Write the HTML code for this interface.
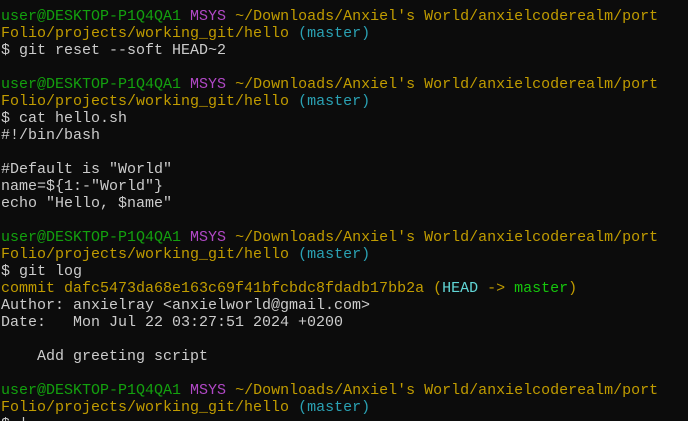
<!DOCTYPE html>
<html><head><meta charset="utf-8"><style>
html,body{margin:0;padding:0;background:#0c0c0c;width:688px;height:421px;overflow:hidden}
pre{margin:0;padding:8px 0 0 1px;font-family:"Liberation Mono",monospace;font-size:15px;line-height:17px;color:#cccccc;white-space:pre}
.g{color:#13a10e}.p{color:#b148c6}.y{color:#c19c00}.c{color:#2aa1b3}.bc{color:#61d6d6}.bg{color:#16c60c}
</style></head><body><pre><span class="g">user@DESKTOP-P1Q4QA1</span> <span class="p">MSYS</span> <span class="y">~/Downloads/Anxiel's World/anxielcoderealm/port
Folio/projects/working_git/hello</span> <span class="c">(master)</span>
$ git reset --soft HEAD~2

<span class="g">user@DESKTOP-P1Q4QA1</span> <span class="p">MSYS</span> <span class="y">~/Downloads/Anxiel's World/anxielcoderealm/port
Folio/projects/working_git/hello</span> <span class="c">(master)</span>
$ cat hello.sh
#!/bin/bash

#Default is "World"
name=${1:-"World"}
echo "Hello, $name"

<span class="g">user@DESKTOP-P1Q4QA1</span> <span class="p">MSYS</span> <span class="y">~/Downloads/Anxiel's World/anxielcoderealm/port
Folio/projects/working_git/hello</span> <span class="c">(master)</span>
$ git log
<span class="y">commit dafc5473da68e163c69f41bfcbdc8fdadb17bb2a (</span><span class="bc">HEAD</span><span class="y"> -&gt; </span><span class="bg">master</span><span class="y">)</span>
Author: anxielray &lt;anxielworld@gmail.com&gt;
Date:   Mon Jul 22 03:27:51 2024 +0200

    Add greeting script

<span class="g">user@DESKTOP-P1Q4QA1</span> <span class="p">MSYS</span> <span class="y">~/Downloads/Anxiel's World/anxielcoderealm/port
Folio/projects/working_git/hello</span> <span class="c">(master)</span>
$ |</pre></body></html>
